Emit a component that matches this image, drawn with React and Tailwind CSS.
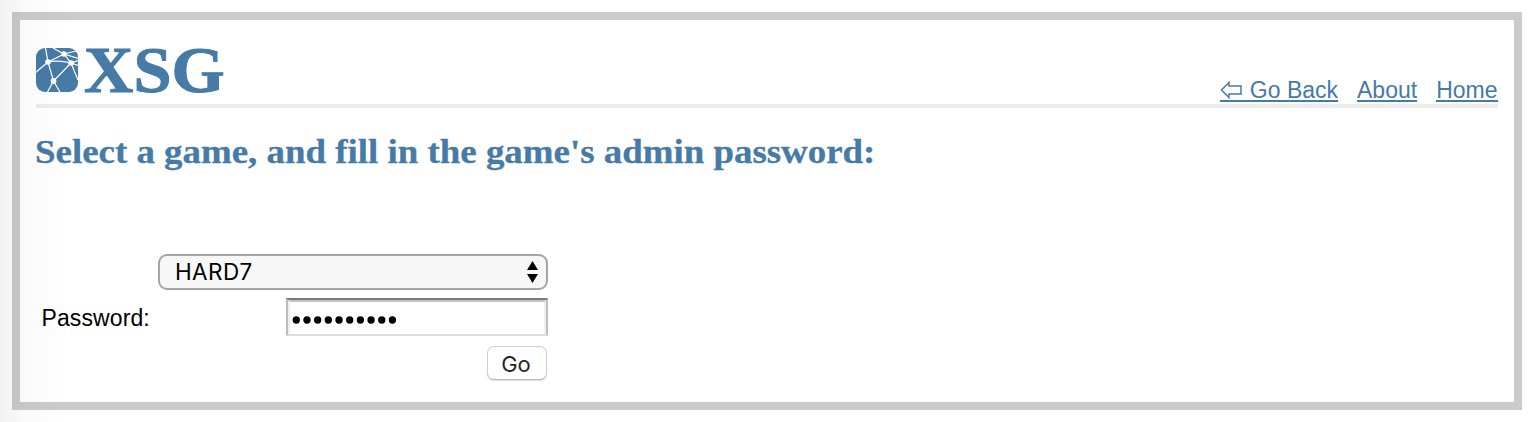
function Logo() {
  return (
    <div className="flex h-[48px] items-center">
      <svg width="42" height="44" viewBox="0 0 42 44" className="shrink-0">
        <defs>
          <clipPath id="tile">
            <rect width="42" height="44" rx="9" />
          </clipPath>
        </defs>
        <g clipPath="url(#tile)">
          <rect width="42" height="44" fill="#467aa7" />
          <g stroke="#fff" strokeWidth="1.2" fill="none">
            <path d="M9.5 0L12 14L28 6L42 2.5M17 0L28 6L35 15L42 12.5M28 6L42 10.5M35 15L42 17.5" />
            <path d="M12 14Q23 12 35 15L17.5 33L12 14L-1 25M35 15L42 32M17.5 33L11 45M17.5 33L24.5 45" />
          </g>
          <g fill="#fff">
            <circle cx="12" cy="14" r="2.8" />
            <circle cx="28" cy="6" r="2.7" />
            <circle cx="35" cy="15" r="2.8" />
            <circle cx="17.5" cy="33" r="2.9" />
          </g>
        </g>
      </svg>
      <span className="ml-[6px] inline-block origin-left scale-x-[1.052] font-['Liberation_Serif',serif] text-[65px] leading-[48px] font-bold [-webkit-text-stroke:1px_#467aa7]">
        XSG
      </span>
    </div>
  );
}

function NavLink({ children }) {
  return (
    <a href="#" className="flex h-[24px] items-center border-b-2 border-[#467aa7] leading-[22px]">
      {children}
    </a>
  );
}

export default function App() {
  return (
    <div className="relative h-[422px] w-[1530px] overflow-hidden bg-white pt-3 pl-3 font-['Liberation_Sans',Arial,sans-serif] text-[23px] text-black">
      <main className="h-[398px] w-[1510px] border-8 border-[#cbcbcb] px-4 pt-[26px]">
        <header className="flex h-[62px] items-start justify-between border-b-4 border-[#ededed] text-[#467aa7]">
          <Logo />
          <nav className="mt-[32px] mr-[0.5px] flex gap-[19px]">
            <NavLink>
              <svg width="22" height="18" viewBox="0 0 22 18" className="mt-[2px] mr-[7.5px]" fill="none" stroke="#467aa7" strokeWidth="1.5">
                <path d="M1.5 9L9 1.5V5H21V13H9V16.5Z" />
              </svg>
              <span className="pt-[2px]">Go Back</span>
            </NavLink>
            <NavLink>
              <span className="pt-[2px]">About</span>
            </NavLink>
            <NavLink>
              <span className="pt-[2px]">Home</span>
            </NavLink>
          </nav>
        </header>
        <h1 className="mt-[25px] -ml-px h-[38px] font-['Liberation_Serif',serif] text-[33px] leading-[38px] font-bold whitespace-nowrap text-[#467aa7]">
          <span className="inline-block origin-left scale-x-[1.118] [-webkit-text-stroke:0.3px_#467aa7]">
            Select a game, and fill in the game's admin password:
          </span>
        </h1>
        <form className="mt-[83px] ml-[5px] flex w-[507px] flex-col items-end">
          <div className="flex h-9 w-[390px] items-center justify-between rounded-[9px] border-2 border-[#a5a5a5] bg-[#f7f7f7] pr-[8px] pl-[15px] font-['Inter',sans-serif] text-[22.5px]">
            <span className="tracking-[0.4px]">HARD7</span>
            <svg width="11" height="22" viewBox="0 0 11 22">
              <path d="M5.5 0L11 9H0ZM5.5 22L0 13H11Z" />
            </svg>
          </div>
          <div className="mt-2 flex w-full items-center justify-between">
            <label className="mt-[3px] pl-[0.5px] tracking-[0.1px]">Password:</label>
            <div className="h-[38px] w-[262px] border-2 border-x-[#bdbdbd] border-t-[#7b7b7b] border-b-[#dddddd] bg-white">
              <div className="flex h-full items-center border-x-2 border-t-2 border-x-[#f0f0f0] border-t-[#c4c4c4] pt-[3px] pl-[2px]">
                <svg width="106" height="8" viewBox="0 0 106 8">
                  {Array.from({ length: 10 }, (_, i) => (
                    <circle key={i} cx={4.3 + i * 10.68} cy="4" r="3.65" />
                  ))}
                </svg>
              </div>
            </div>
          </div>
          <button type="button" className="mt-[10px] mr-px h-[34px] w-[60px] rounded-[7px] border border-[#cdcdcd] border-b-[#b9b9b9] bg-white pt-px pr-[2px] font-['Inter',sans-serif] text-[22px] leading-[32px] text-[#262626] shadow-[0_1px_1px_rgba(0,0,0,0.12)]">
            Go
          </button>
        </form>
      </main>
      <div className="pointer-events-none absolute inset-y-0 left-0 w-[70px] bg-linear-to-r from-black/5 via-black/2 via-40% to-transparent" />
    </div>
  );
}
